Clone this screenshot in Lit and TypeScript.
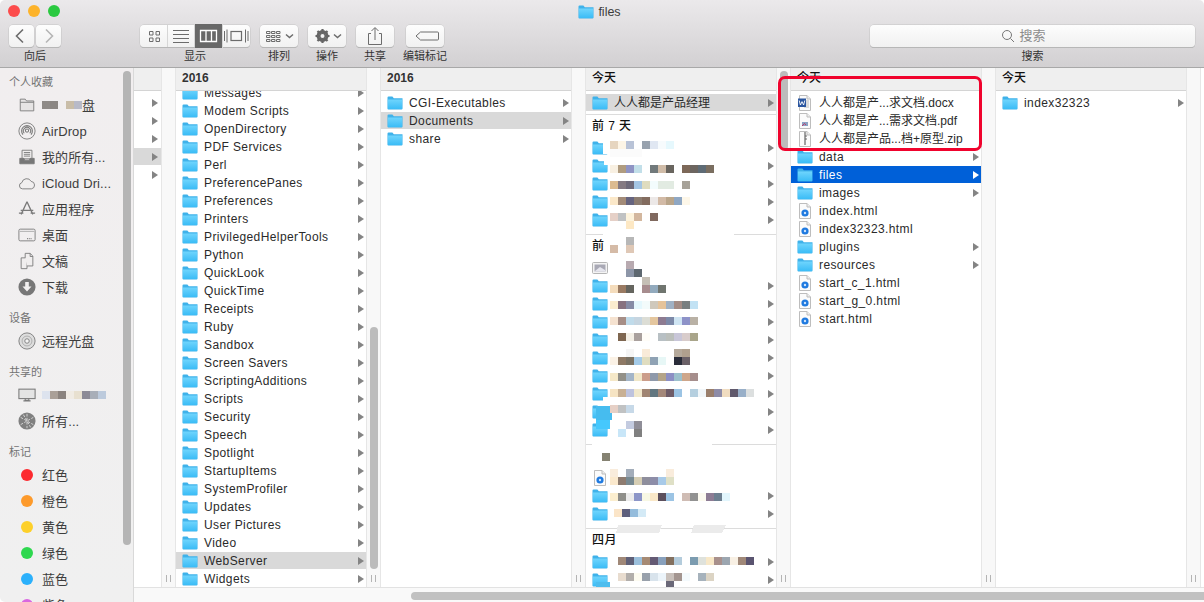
import { LitElement, html, css, svg } from "lit";
import { customElement } from "lit/decorators.js";

const folder = () => svg`<svg class="ic" width="16" height="14" viewBox="0 0 16 14"><path d="M.5 12.6V1.6Q.5.5 1.6.5H5.4L6.8 2.2H15.5V12.6Q15.5 13.5 14.6 13.5H1.4Q.5 13.5.5 12.6Z" fill="#3fb2ea"/><path d="M.9 12.5V3.4H15.1V12.5Q15.1 13 14.6 13H1.4Q.9 13 .9 12.5Z" fill="url(#fg)"/></svg>`;
const page = (inner: unknown) => svg`<svg class="ic" width="16" height="16" viewBox="0 0 16 16"><path d="M2.5.5H10L13.5 4V15.5H2.5Z" fill="#fbfbfb" stroke="#bdbdbd"/><path d="M10 .5V4H13.5" fill="#eee" stroke="#bdbdbd"/>${inner}</svg>`;
const htmlDoc = () => page(svg`<circle cx="8" cy="10" r="3.6" fill="#1f7ae0"/><circle cx="8" cy="10" r="1.2" fill="#cfe4fb"/>`);
const wordDoc = () => page(svg`<path d="M7 6H12M7 8H12M7 10H12M7 12H12" stroke="#aaa" stroke-width=".8"/><rect x="1" y="3.5" width="8" height="8.5" fill="#2b569f"/><path d="M2.2 5.5 3.4 10 5 6.6 6.6 10 7.8 5.5" fill="none" stroke="#fff" stroke-width=".9"/>`);
const pdfDoc = () => page(svg`<rect x="5" y="9" width="6" height="4" fill="#8ba3c4"/><path d="M5 13 7.5 10.5 9 12" fill="none" stroke="#c25" stroke-width=".8"/>`);
const zipDoc = () => page(svg`<path d="M8 1V14" stroke="#444" stroke-width="1"/><path d="M8 5H10M8 8H10" stroke="#666"/>`);
const imgDoc = () => svg`<svg class="ic" width="16" height="14" viewBox="0 0 16 14"><rect x=".5" y="1.5" width="15" height="11" rx="1" fill="#f4f4f4" stroke="#b5b5b5"/><rect x="2.5" y="3.5" width="11" height="7" fill="#a9a9b5"/><path d="M3 10 8 6 13 9V10.5H3Z" fill="#e6e6ee"/></svg>`;

const sbar = (p: unknown) => svg`<svg class="si" width="18" height="18" viewBox="0 0 20 20" fill="none" stroke="#7b7b7b" stroke-width="1">${p}</svg>`;
const I = {
  folder: sbar(svg`<path d="M2.5 16.5V3.5H8L9.5 5.5H17.5V16.5Z" fill="#e6e4e4"/><path d="M2.5 7H17.5"/>`),
  air: sbar(svg`<circle cx="10" cy="10" r="9"/><path d="M5.5 14A6 6 0 1 1 14.5 14M7 12.5A4 4 0 1 1 13 12.5" stroke-width="1.2"/><circle cx="10" cy="9.5" r="1.8" stroke-width="1.2"/>`),
  all: sbar(svg`<path d="M4.5 2.5H15.5V12H4.5Z" fill="#f0eeee"/><path d="M6.5 5H13.5M6.5 7H13.5M6.5 9H13.5"/><path d="M2 11.5H6.5L7.5 13.5H12.5L13.5 11.5H18V17.5H2Z" fill="#777"/>`),
  cloud: sbar(svg`<path d="M5 16.5A3.5 3.5 0 0 1 4.3 9.6 5.5 5.5 0 0 1 14.6 8.2 4.2 4.2 0 0 1 15 16.5Z"/>`),
  apps: sbar(svg`<path d="M10 2 3.5 16M10 2 16.5 16M3 11.5H17M1 14.5H6M14 14.5H19" stroke-width="1.5"/>`),
  desk: sbar(svg`<rect x="1" y="3.5" width="18" height="13" rx="1.5"/><path d="M2 6H18" stroke="#aaa"/><path d="M10 14H15" stroke-dasharray="1 1" stroke-width="1.5"/>`),
  docs: sbar(svg`<path d="M3.5 6.5H10V18.5H3.5Z" fill="#f0eeee"/><path d="M10 15.5H16.5V4.5L13.5 1.5H8V6.5" fill="#f0eeee"/><path d="M13.5 1.5V5H16.5"/>`),
  down: sbar(svg`<circle cx="10" cy="10" r="9.5" fill="#777" stroke="none"/><path d="M8 4.5H12V9.5H15L10 15 5 9.5H8Z" fill="#f2f0f0" stroke="none"/>`),
  disc: sbar(svg`<circle cx="10" cy="10" r="9" fill="#ddd"/><circle cx="10" cy="10" r="5.5" stroke="#aaa"/><circle cx="10" cy="10" r="2.5" fill="#f4f4f4"/>`),
  mon: sbar(svg`<rect x="1" y="3.5" width="18" height="10.5" fill="#e4e4e4" stroke-width="1.2"/><path d="M8 14V16H12V14M6 16.5H14" stroke-width="1.2"/>`),
  globe: sbar(svg`<circle cx="10" cy="10" r="9.5" fill="#808080" stroke="none"/><path d="M10 2V18M3 6 17 14M3 14 17 6M6 3 14 17" stroke="#e4e4e4" stroke-width=".9" stroke-dasharray="3 1.5"/>`),
};

const tb = (p: unknown, w = 22, h = 22) => svg`<svg width=${w} height=${h} viewBox="0 0 ${w} ${h}" fill="none" stroke="#6c6c6c" stroke-width="1">${p}</svg>`;
const caret = svg`<path d="M26 9.5 29.5 12.5 33 9.5" stroke-width="1.5"/>`;
const T = {
  back: tb(svg`<path d="M14 4.5 7.5 11 14 17.5" stroke-width="1.6"/>`, 25),
  fwd: tb(svg`<path d="M10 4.5 16.5 11 10 17.5" stroke="#b5b5b5" stroke-width="1.6"/>`, 25),
  grid: tb(svg`<path d="M6.5 6.5H10V10H6.5ZM13 6.5H16.5V10H13ZM6.5 13H10V16.5H6.5ZM13 13H16.5V16.5H13Z"/>`),
  list: tb(svg`<path d="M3 5.5H19M3 9.5H19M3 13.5H19M3 17.5H19"/>`),
  cols: tb(svg`<path d="M3.5 5.5H19.5V16.5H3.5ZM9 5.5V16.5M14.5 5.5V16.5" stroke="#fff" stroke-width="1.3"/>`, 23),
  flow: tb(svg`<path d="M1.5 6V16M4 4.5V17.5M22.5 4.5V17.5M25 6V16"/><rect x="8" y="6.5" width="10.5" height="9" stroke-width="1.2"/>`, 27),
  sort: tb(svg`<path d="M6.5 6.5H10V8.5H6.5ZM11.5 6.5H15V8.5H11.5ZM16.5 6.5H20V8.5H16.5ZM6.5 10.5H10V12.5H6.5ZM11.5 10.5H15V12.5H11.5ZM16.5 10.5H20V12.5H16.5ZM6.5 14.5H10V16.5H6.5ZM11.5 14.5H15V16.5H11.5ZM16.5 14.5H20V16.5H16.5Z"/>${caret}`, 38),
  gear: tb(svg`<circle cx="14.5" cy="11" r="4.5" stroke="#666" stroke-width="3"/><path d="M14.5 4V18M7.5 11H21.5M9.5 6 19.5 16M9.5 16 19.5 6" stroke="#666" stroke-width="2.2"/><circle cx="14.5" cy="11" r="2" fill="#f4f4f4" stroke="none"/>${caret}`, 38),
  share: tb(svg`<path d="M15 8.5H12.5V19.5H25.5V8.5H23M19 15V3M15.5 6 19 2.5 22.5 6"/>`, 38),
  tag: tb(svg`<path d="M14.5 7H31.5Q32.5 7 32.5 8V14Q32.5 15 31.5 15H14.5L10 11Z"/>`, 38),
};

const colA = "Messages|Modem Scripts|OpenDirectory|PDF Services|Perl|PreferencePanes|Preferences|Printers|PrivilegedHelperTools|Python|QuickLook|QuickTime|Receipts|Ruby|Sandbox|Screen Savers|ScriptingAdditions|Scripts|Security|Speech|Spotlight|StartupItems|SystemProfiler|Updates|User Pictures|Video|WebServer|Widgets".split("|");

const M: [number, number, string][] = [
  [141,610,"e6d5bf fdf5e6 b9c3d7 - 98a2ae e0e7f2 f7fbfd e6f8fd"],
  [149,610,"fbfbfb fbfbfb fbfbfb fbfbfb"],
  [165,610,"f8f0e2 b09c80 8f94c4 c2dfe9 - 71797b d0bca8 69655f - 7d6858 6c6560 5e6b75 7a6e60"],
  [181,610,"dcbb90 857a82 6f6a7a a4c5e4 dfdcbf f3fcfd e2ebe2 e2ebe2 - a7a299"],
  [197,610,"fbe8c9 a38b78 66647f 8c7c70 836c5f ece8e7 d2baa6 b9a58a 8fa7c3 fdf7e9"],
  [213,610,"e5d0c7 c0c2c3 fdf3dc d3b79e - 80695f"],
  [221,626,"fde8c4"],
  [237,626,"b7b7b7"],
  [245,610,"d5bba7 - dfc8b6"],
  [261,626,"b8aab0"],
  [269,626,"8d96a8 5e6870"],
  [277,642,"c5bfb5"],
  [285,610,"f4dcbc 9a7b63 65655f - a78c8e 92aabd 70756f"],
  [301,610,"fbeccf 87717f 868ca6 e5f8fd f3fbfb cfc8bb e5c39a a0b1c4 a38c85 787f80 c2e2f4"],
  [317,610,"f5e2d0 a68e86 c0dbea c6d5e0 dcddd5 e4c69e 8d7b91 7c89a8 cfe5f3 8d92c8 b9b1a5"],
  [333,618,"7e6650 f3efe6 a9a09d fffdf8 - b8c0c4 bbbfbb c8c6d8 d8cccb a9a58a"],
  [349,626,"f5f5f5 - f9ebd9 - - - b5a99b b0a08e"],
  [357,610,"fbf2e6 8e7965 7a7264 a4cbe8 e0ddc0 8fa2b4 e7f7f6 - 2a2d3a 6b6168"],
  [373,610,"f5e8c8 929088 a3b5c8 f0e7c8 cb9d8a 8e99aa b4a488 8c8fc4 9cc0cc cea68a a68e8c"],
  [389,610,"f6e4c3 c8b094 bec3de f1e8cc a08573 627680 a4887a 6e5c68 9cc4e4 - b5cfdf f1f6f9 9a7f6c 8e8ca8 f0dcc0 60596c 98afc8 dcdfdf"],
  [405,610,"e6d0c6 c0c2c3 c7d9e8"],
  [421,626,"c3cbe0 8f8e98"],
  [429,618,"c8e6f8 - 808080"],
  [453,602,"858272"],
  [469,610,"f9ecdc - a3adba - - - - f9ecdc"],
  [477,610,"fbe9cd 8e7c70 788a92 d6ceb4 8e8e9c 8d8da8 a8cae8 dfe0c6"],
  [493,610,"fbeecf 8f8f8a ebebeb 8c95c8 f8f8e4 fae8c8 5c4f5c 9cc4e4 - cfbcb4 929292 fcfaf0 8d7c94 6d7f90 e2f6fd"],
  [509,614,"fbe5c8 5e5f7c 94bcdc d4eaf6"],
  [557,618,"a08878 5f6078 9cc0dc a68a74 645a74 88a0bc 83705f b4ccdc - 7c9cb0 dfe2dc f8e8c8 a8908c 9ca6b0 f8f0e4 a08878 5a5470"],
  [573,618,"e8dccf b2aeab fdfbf0 98a0ab d8e3ec ecf4fa c8c0bb a39590 f4fafd - a6b2bc dcd4c4"],
  [581,666,"6a6878"],
];
const cover: [number, number, number, number, string][] = [
  [603,142,8,12,"#fff"],[604,160,6,5,"#fff"],[603,233,37,3,"#fff"],[634,233,100,3,"#fff"],
  [592,443,120,3,"#fff"],[592,454,10,8,"#fff"],[603,397,8,10,"#fff"],[596,406,16,14,"#46bcef"],[596,420,14,9,"#45c8fd"],
  [613,586,100,1,"#fff"],[596,582,14,5,"#4dbdee"],
];

@customElement("app-root")
export class AppRoot extends LitElement {
  static styles = css`
    :host { display: block; width: 1204px; height: 602px; overflow: hidden; background: #fff; font-family: "Liberation Sans", "Noto Sans CJK SC", sans-serif; color: #2b2b2b; }
    svg { display: block; flex: none; }
    .defs { width: 0; height: 0; position: absolute; }
    .bar { height: 68px; box-sizing: border-box; border-bottom: 1px solid #a8a8a8; border-radius: 5px 5px 0 0; background: linear-gradient(#ebe9eb, #d2d0d2); position: relative; }
    .title { height: 24px; display: flex; align-items: center; justify-content: center; gap: 4px; font-size: 12.5px; color: #3c3c3c; padding-right: 5px; }
    .lights { position: absolute; left: 8px; top: 5px; display: flex; gap: 8px; }
    .lights i { width: 12px; height: 12px; border-radius: 50%; }
    .tools { display: flex; padding: 1px 9px 0; }
    .tool { display: flex; flex-direction: column; align-items: center; gap: 2px; font-size: 11px; line-height: 14px; color: #333; white-space: nowrap; }
    .btn { height: 22px; box-sizing: border-box; background: linear-gradient(#fdfdfd, #f1f1f1); border-radius: 4px; box-shadow: 0 0 0 .5px #c4c4c4, 0 1px 0 #aaa; display: flex; }
    .seg { display: flex; align-items: center; justify-content: center; border-right: 1px solid #d6d6d6; }
    .seg:last-child { border: 0; }
    .seg.on { background: #686868; height: 24px; margin-top: -1px; }
    .w38 { width: 38px; }
    .search { width: 325px; margin-left: auto; }
    .sbox { width: 100%; align-items: center; justify-content: center; gap: 4px; font-size: 13px; color: #8c8c8c; padding-right: 18px; box-sizing: border-box; }
    .back { display: flex; gap: 2px; }
    .sp10 { width: 10px; } .sp12 { width: 12px; } .sp79 { width: 79px; }
    .view { width: 110px; }
    .s28 { width: 28px; } .s26 { width: 26px; } .s27 { width: 27px; }
    .main { display: flex; height: 534px; }
    .side { width: 134px; flex: none; border-right: 1px solid #d9d9d9; background: linear-gradient(#f1eeef, #f0f0f0); position: relative; overflow: hidden; border-bottom-left-radius: 5px; padding: 6px 0 0 9px; box-sizing: border-box; font-size: 13px; letter-spacing: .1px; color: #3d3d3d; }
    .sh { font-size: 11px; line-height: 16px; color: #737373; letter-spacing: 0; height: 16px; margin-bottom: 2px; }
    .sh.gap { margin-top: 10px; }
    .si-row { height: 26px; display: flex; align-items: center; gap: 6px; padding-left: 9px; white-space: nowrap; }
    .si-row .cj { margin-top: -2px; }
    .si-row .tight { margin-left: -6px; }
    .dot { width: 12px; height: 12px; border-radius: 50%; margin: 0 3px 0 3px; flex: none; }
    .blurs { display: flex; height: 8px; }
    .blurs i { width: 8px; height: 8px; }
    .sthumb { position: absolute; left: 123px; top: 3px; width: 8px; height: 474px; border-radius: 4px; background: #b5b5b5; }
    .right { flex: 1; min-width: 0; display: flex; flex-direction: column; }
    .cols { height: 519px; display: flex; overflow: hidden; }
    .col { width: 190px; flex: none; position: relative; overflow: hidden; font-size: 12px; }
    .col.c0 { width: 27px; }
    .head { height: 23px; box-sizing: border-box; border-bottom: 1px solid #d4d4d4; background: #efefef; padding-left: 6px; font-weight: 700; line-height: 20px; color: #333; position: relative; }
    .head.cj { font-weight: 500; color: #111; line-height: 21px; }
    .head.over { position: absolute; left: 0; right: 0; top: 0; }
    .list { padding-top: 2px; }
    .list.up { padding-top: 15px; }
    .list.flush { padding-top: 0; }
    .row { height: 18px; box-sizing: border-box; border-top: 1px solid transparent; background-clip: padding-box; display: flex; align-items: center; padding: 0 2px 0 6px; gap: 6px; letter-spacing: .4px; white-space: nowrap; color: #2a2a2a; }
    .row.cjk { letter-spacing: 0; }
    .row.cjk .n { margin-top: -2px; }
    .row.sel { background-color: #d9d9d9; }
    .row.act { background-color: #0060d8; color: #fff; }
    .row.ch { justify-content: flex-end; padding-right: 3px; }
    .row .n { flex: 1; min-width: 0; }
    .tri { width: 0; height: 0; border-left: 6px solid #848484; border-top: 4.5px solid transparent; border-bottom: 4.5px solid transparent; }
    .act .tri { border-left-color: #fff; }
    .sec { border-top: 1px solid #dcdcdc; padding-bottom: 6px; }
    .sec.first { border: 0; padding: 2px 0 3px; }
    .sh2 { height: 23px; padding-left: 6px; line-height: 22px; font-weight: 500; color: #111; letter-spacing: .4px; }
    .mosaic { position: absolute; left: 0; top: 0; }
    .handle { width: 13px; flex: none; border-left: 1px solid #e6e6e6; border-right: 1px solid #e6e6e6; background: #f8f8f8; position: relative; }
    .handle::after { content: ""; position: absolute; left: 4px; bottom: 5px; width: 1.5px; height: 7px; border-left: 1.5px solid #b4b4b4; border-right: 1.5px solid #b4b4b4; padding: 0 .5px; }
    .vthumb { position: absolute; left: 3px; width: 8px; border-radius: 4px; background: #bcbcbc; }
    .hbar { height: 15px; box-sizing: border-box; border-top: 1px solid #e2e2e2; background: #f9f9f9; padding: 4px 0 0 277px; }
    .hbar i { display: block; height: 8px; border-radius: 4px 0 0 4px; background: #c1c1c1; }
    .red { position: absolute; left: 778px; top: 76px; width: 204px; height: 75px; box-sizing: border-box; border: 3px solid #f0032d; border-radius: 7px; }
  `;

  private row(name: unknown, icon: unknown = folder(), opts: { tri?: boolean; cls?: string } = {}) {
    const { tri = true, cls = "" } = opts;
    return html`<div class="row ${cls}">${icon}<span class="n">${name}</span>${tri ? html`<span class="tri"></span>` : ""}</div>`;
  }
  private handle(thumb?: [number, number]) {
    return html`<div class="handle">${thumb ? html`<div class="vthumb" style="top:${thumb[0]}px;height:${thumb[1]}px"></div>` : ""}</div>`;
  }
  private tool(label: string, body: unknown, cls = "") {
    return html`<div class="tool ${cls}">${body}<span>${label}</span></div>`;
  }
  private blur(cols: string[]) {
    return html`<span class="blurs">${cols.map((c) => html`<i style="background:${c}"></i>`)}</span>`;
  }
  private side() {
    const k = (t: string) => (/^[\x00-\x7f]*$/.test(t) ? "" : "cj");
    const item = (ic: unknown, t: string) => html`<div class="si-row">${ic}<span class=${k(t)}>${t}</span></div>`;
    const tag = (c: string, t: string) => html`<div class="si-row"><i class="dot" style="background:${c}"></i><span class="cj">${t}</span></div>`;
    return html`<aside class="side">
      <div class="sh">个人收藏</div>
      <div class="si-row">${I.folder}${this.blur(["#8f8b88", "#8b8683", "transparent", "#c9bda8", "#b8bac8"])}<span class="cj tight">盘</span></div>
      ${item(I.air, "AirDrop")}${item(I.all, "我的所有...")}${item(I.cloud, "iCloud Dri...")}${item(I.apps, "应用程序")}${item(I.desk, "桌面")}${item(I.docs, "文稿")}${item(I.down, "下载")}
      <div class="sh gap">设备</div>
      ${item(I.disc, "远程光盘")}
      <div class="sh gap">共享的</div>
      <div class="si-row">${I.mon}${this.blur(["#dde3ee", "#aaa098", "#8b837e", "#f0ebe4", "#e8e0d0", "#8c8a96", "#a8aeb8", "#bccadc"])}</div>
      ${item(I.globe, "所有...")}
      <div class="sh gap">标记</div>
      ${tag("#fc2a2f", "红色")}${tag("#fd9a2b", "橙色")}${tag("#fdd02a", "黄色")}${tag("#2ed84f", "绿色")}${tag("#2bb0fb", "蓝色")}${tag("#d967e0", "紫色")}
      <div class="sthumb"></div>
    </aside>`;
  }
  private mosaic() {
    return svg`<svg class="mosaic" width="190" height="519" viewBox="586 68 190 519" shape-rendering="crispEdges">
      ${cover.map(([x, y, w, h, c]) => svg`<rect x=${x} y=${y} width=${w} height=${h} fill=${c} />`)}
      ${M.map(([y, x0, s]) => s.split(" ").map((c, i) => c === "-" ? "" : svg`<rect x=${x0 + i * 8} y=${y} width="8" height="8" fill="#${c}" />`))}
      <path d="M618 525H662L659 533H616ZM694 525H726L722 533H691Z" fill="#ebebeb"/>
    </svg>`;
  }
  render() {
    const blank = (n: number) => Array.from({ length: n }, () => this.row(""));
    return html`
      <svg class="defs"><defs><linearGradient id="fg" x1="0" y1="0" x2="0" y2="1"><stop offset="0" stop-color="#70d5fd"/><stop offset="1" stop-color="#3bbcf6"/></linearGradient></defs></svg>
      <header class="bar">
        <div class="lights"><i style="background:#fc4c4c"></i><i style="background:#fdb32a"></i><i style="background:#2ac940"></i></div>
        <div class="title">${folder()}<span>files</span></div>
        <div class="tools">
          ${this.tool("向后", html`<div class="back"><div class="btn">${T.back}</div><div class="btn">${T.fwd}</div></div>`)}
          <div class="sp79"></div>
          ${this.tool("显示", html`<div class="btn view"><div class="seg s28">${T.grid}</div><div class="seg s26">${T.list}</div><div class="seg on s27">${T.cols}</div><div class="seg s28">${T.flow}</div></div>`)}
          <div class="sp10"></div>
          ${this.tool("排列", html`<div class="btn">${T.sort}</div>`, "w38")}
          <div class="sp10"></div>
          ${this.tool("操作", html`<div class="btn">${T.gear}</div>`, "w38")}
          <div class="sp10"></div>
          ${this.tool("共享", html`<div class="btn">${T.share}</div>`, "w38")}
          <div class="sp12"></div>
          ${this.tool("编辑标记", html`<div class="btn">${T.tag}</div>`, "w38")}
          ${this.tool("搜索", html`<div class="btn sbox"><svg width="14" height="14" viewBox="0 0 14 14" fill="none" stroke="#777"><circle cx="6" cy="6" r="4.5"/><path d="M9.5 9.5 13 13"/></svg><span>搜索</span></div>`, "search")}
        </div>
      </header>
      <div class="main">
        ${this.side()}
        <div class="right">
          <div class="cols">
            <div class="col c0"><div class="head"></div><div class="list">
              ${[0, 1, 2, 3, 4].map((i) => html`<div class="row ch ${i === 3 ? "sel" : ""}"><span class="tri"></span></div>`)}
            </div></div>
            ${this.handle()}
            <div class="col"><div class="list up">
              ${colA.map((n) => this.row(n, folder(), { cls: n === "WebServer" ? "sel" : "" }))}
            </div><div class="head over">2016</div></div>
            ${this.handle([259, 242])}
            <div class="col"><div class="head">2016</div><div class="list">
              ${this.row("CGI-Executables")}${this.row("Documents", folder(), { cls: "sel" })}${this.row("share")}
            </div></div>
            ${this.handle()}
            <div class="col"><div class="head cj">今天</div><div class="list flush">
              <div class="sec first">${this.row("人人都是产品经理", folder(), { cls: "sel cjk" })}</div>
              <div class="sec"><div class="sh2">前 7 天</div>${blank(5)}</div>
              <div class="sec"><div class="sh2">前</div>${this.row("", imgDoc(), { tri: false })}${blank(9)}</div>
              <div class="sec"><div class="sh2"></div>${this.row("", htmlDoc(), { tri: false })}${blank(2)}</div>
              <div class="sec"><div class="sh2">四月</div>${blank(2)}</div>
            </div>${this.mosaic()}</div>
            ${this.handle([3, 79])}
            <div class="col"><div class="head cj">今天</div><div class="list">
              ${this.row("人人都是产...求文档.docx", wordDoc(), { tri: false, cls: "cjk" })}
              ${this.row("人人都是产...需求文档.pdf", pdfDoc(), { tri: false, cls: "cjk" })}
              ${this.row("人人都是产品...档+原型.zip", zipDoc(), { tri: false, cls: "cjk" })}
              ${this.row("data")}${this.row("files", folder(), { cls: "act" })}${this.row("images")}
              ${this.row("index.html", htmlDoc(), { tri: false })}${this.row("index32323.html", htmlDoc(), { tri: false })}
              ${this.row("plugins")}${this.row("resources")}
              ${this.row("start_c_1.html", htmlDoc(), { tri: false })}${this.row("start_g_0.html", htmlDoc(), { tri: false })}${this.row("start.html", htmlDoc(), { tri: false })}
            </div></div>
            ${this.handle()}
            <div class="col"><div class="head cj">今天</div><div class="list">${this.row("index32323")}</div></div>
            ${this.handle()}
          </div>
          <div class="hbar"><i></i></div>
        </div>
      </div>
      <div class="red"></div>
    `;
  }
}
